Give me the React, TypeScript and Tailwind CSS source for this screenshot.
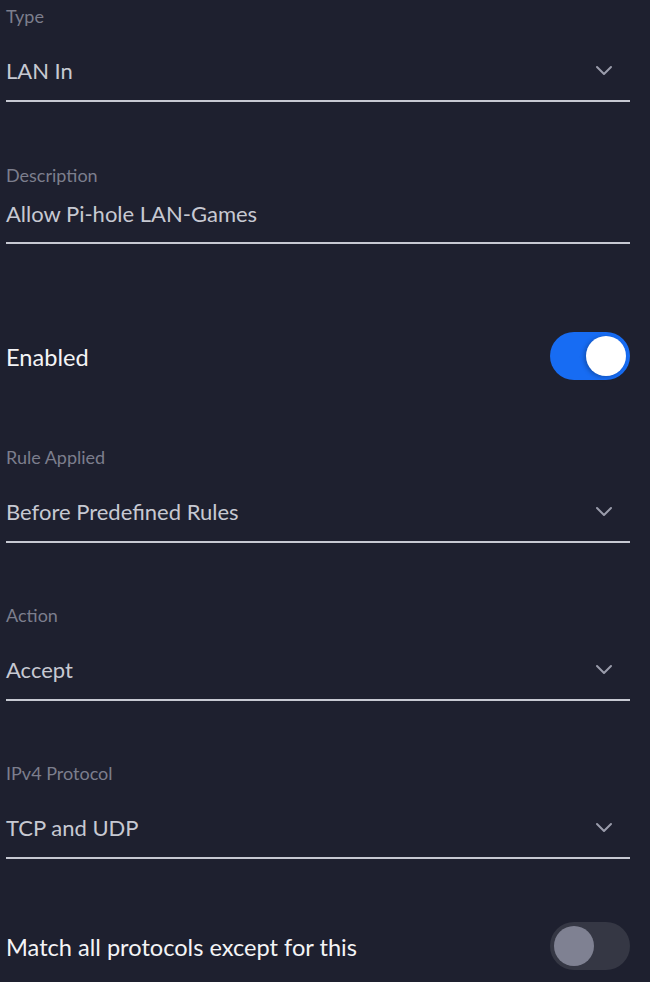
import { useState } from "react";

const Chevron = () => (
  <svg width="20" height="14" viewBox="0 0 20 14" fill="none" className="mr-[16px] shrink-0">
    <polyline points="3,3 10,10 17,3" stroke="#9a9cab" strokeWidth="2" strokeLinecap="round" strokeLinejoin="round" />
  </svg>
);

interface SelectFieldProps {
  label: string;
  value: string;
  className?: string;
}

const SelectField = ({ label, value, className = "" }: SelectFieldProps) => (
  <div className={className}>
    <div className="text-[18px] leading-[32px] text-[#7c7e8d]">{label}</div>
    <div className="mt-[24px] pb-[14px] flex items-center justify-between border-b-2 border-[#c7c9d2]">
      <span className="text-[22px] leading-[30px] text-[#c7c9d2]">{value}</span>
      <Chevron />
    </div>
  </div>
);

const Toggle = ({ on, onClick }: { on: boolean; onClick: () => void }) => (
  <button
    type="button"
    onClick={onClick}
    className={`w-[80px] h-[48px] rounded-full p-[4px] flex items-center shrink-0 ${
      on ? "bg-[#176cf3] justify-end" : "bg-[#353744] justify-start"
    }`}
  >
    <span
      className={`w-[40px] h-[40px] rounded-full ${
        on ? "bg-white shadow-[-2px_1px_4px_rgba(0,0,0,0.25)]" : "bg-[#7f8192]"
      }`}
    />
  </button>
);

export default function App() {
  const [enabled, setEnabled] = useState(true);
  const [matchAll, setMatchAll] = useState(false);

  return (
    <div className="w-[650px] h-[982px] overflow-hidden bg-[#1e202f] pl-[6px] pr-[20px] font-['Lato','Noto_Sans',sans-serif]">
      <SelectField label="Type" value="LAN In" />

      <div className="mt-[57px]">
        <div className="text-[18px] leading-[32px] text-[#7c7e8d]">Description</div>
        <div className="mt-[8px] pb-[13px] border-b-2 border-[#c7c9d2]">
          <span className="text-[22px] leading-[30px] text-[#c7c9d2]">Allow Pi-hole LAN-Games</span>
        </div>
      </div>

      <div className="mt-[88px] flex items-center justify-between">
        <span className="mt-[4px] text-[23.6px] text-[#f4f4f6]">Enabled</span>
        <Toggle on={enabled} onClick={() => setEnabled(!enabled)} />
      </div>

      <SelectField label="Rule Applied" value="Before Predefined Rules" className="mt-[61px]" />
      <SelectField label="Action" value="Accept" className="mt-[56px]" />
      <SelectField label="IPv4 Protocol" value="TCP and UDP" className="mt-[56px]" />

      <div className="mt-[63px] flex items-center justify-between">
        <span className="mt-[4px] text-[23.6px] text-[#f4f4f6]">Match all protocols except for this</span>
        <Toggle on={matchAll} onClick={() => setMatchAll(!matchAll)} />
      </div>
    </div>
  );
}
